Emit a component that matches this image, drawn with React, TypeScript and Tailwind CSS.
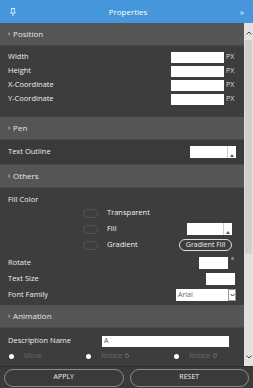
import React from 'react';

const font = { fontFamily: '"Open Sans", "Noto Sans", sans-serif' };

function SectionHeader({ title }: { title: string }) {
  return (
    <div className="h-[23px] bg-[#555555] flex items-center pl-[8px] text-[8px] text-[#e6e6e6] border-b border-[#4a4a4a]">
      <span className="mr-[3px] text-[7px]">›</span>
      {title}
    </div>
  );
}

function PxRow({ label }: { label: string }) {
  return (
    <div className="h-[14px] flex items-center pl-[8px] pr-[8px]">
      <span className="flex-1 text-[7.5px] text-[#eeeeee]">{label}</span>
      <div className="w-[53px] h-[11px] bg-white" />
      <span className="w-[10px] ml-[2px] text-[7px] text-[#dddddd]">PX</span>
    </div>
  );
}

function ColorPick({ w }: { w: string }) {
  return (
    <div className={`${w} h-[12px] bg-white flex justify-end`}>
      <div className="w-[9px] h-full border-l border-[#cccccc] flex items-end justify-center pb-[1px]">
        <div className="w-0 h-0 border-l-[2px] border-r-[2px] border-b-[3px] border-l-transparent border-r-transparent border-b-[#555555]" />
      </div>
    </div>
  );
}

function Oval() {
  return <div className="w-[15px] h-[9px] rounded-full border border-[#555555] ml-[83px] mr-[9px]" />;
}

function RotIcon({ flip }: { flip?: boolean }) {
  return (
    <svg width="6" height="6" viewBox="0 0 10 10" className={`ml-[2px] ${flip ? '-scale-x-100' : ''}`}>
      <path d="M2 6a3 3 0 1 0 1-4" fill="none" stroke="#777777" strokeWidth="1.6" />
      <path d="M1 1l3 1-2 2z" fill="#777777" />
    </svg>
  );
}

export default function App() {
  return (
    <div className="w-[253px] h-[388px] flex flex-col bg-[#3d3d3d] overflow-hidden" style={font}>
      <div className="h-[23px] bg-[#4596da] flex items-center px-[10px] text-white">
        <svg width="6" height="8" viewBox="0 0 6 8" className="opacity-90">
          <path d="M1 0.5h4M1.5 0.5v3L0.5 5h5L4.5 3.5v-3M3 5v3" fill="none" stroke="white" strokeWidth="0.9" />
        </svg>
        <span className="flex-1 text-center text-[8px]">Properties</span>
        <span className="text-[8px] tracking-[-1px]">»</span>
      </div>

      <div className="flex-1 flex min-h-0">
        <div className="flex-1 flex flex-col min-w-0">
          <SectionHeader title="Position" />
          <div className="pt-[4px] pb-[11px]">
            <PxRow label="Width" />
            <PxRow label="Height" />
            <PxRow label="X-Coordinate" />
            <PxRow label="Y-Coordinate" />
          </div>

          <SectionHeader title="Pen" />
          <div className="h-[25px] bg-[#3a3a3a] flex items-center pl-[8px] pr-[8px] border-b border-[#4a4a4a]">
            <span className="flex-1 text-[7.5px] text-[#eeeeee]">Text Outline</span>
            <ColorPick w="w-[46px]" />
          </div>

          <SectionHeader title="Others" />
          <div className="pt-[6px] pb-[2px] text-[7.5px] text-[#eeeeee]">
            <div className="h-[11px] flex items-center pl-[8px]">Fill Color</div>
            <div className="h-[16px] flex items-center">
              <Oval />
              <span>Transparent</span>
            </div>
            <div className="h-[16px] flex items-center pr-[12px]">
              <Oval />
              <span className="flex-1">Fill</span>
              <ColorPick w="w-[45px]" />
            </div>
            <div className="h-[16px] flex items-center pr-[12px]">
              <Oval />
              <span className="flex-1">Gradient</span>
              <div className="w-[53px] h-[12px] rounded-full border border-[#dddddd] flex items-center justify-center text-[7px]">
                Gradient Fill
              </div>
            </div>
            <div className="h-[2px]" />
            <div className="h-[16px] flex items-center pl-[8px] pr-[8px]">
              <span className="flex-1">Rotate</span>
              <div className="w-[29px] h-[12px] bg-white" />
              <span className="w-[5px] ml-[3px] text-[7px] leading-none self-start mt-[2px]">°</span>
            </div>
            <div className="h-[16px] flex items-center pl-[8px] pr-[9px]">
              <span className="flex-1">Text Size</span>
              <div className="w-[29px] h-[12px] bg-white" />
            </div>
            <div className="h-[16px] flex items-center pl-[8px] pr-[8px]">
              <span className="flex-1">Font Family</span>
              <div className="w-[60px] h-[12px] bg-white flex items-center">
                <span className="flex-1 pl-[2px] text-[7px] text-[#666666]">Arial</span>
                <div className="w-[8px] h-full border border-[#999999] flex items-center justify-center">
                  <svg width="5" height="4" viewBox="0 0 5 4">
                    <path d="M0.5 1l2 2 2-2" fill="none" stroke="#333333" strokeWidth="1" />
                  </svg>
                </div>
              </div>
            </div>
          </div>

          <SectionHeader title="Animation" />
          <div className="pt-[6px] text-[7.5px] text-[#eeeeee]">
            <div className="h-[14px] flex items-center pl-[8px] pr-[15px]">
              <span className="w-[94px]">Description Name</span>
              <div className="flex-1 h-[11px] bg-white flex items-center pl-[2px] text-[7px] text-[#555555]">A</div>
            </div>
            <div className="h-[16px] flex items-center text-[7px] text-[#6a6a6a]">
              <div className="w-[5px] h-[5px] rounded-full bg-white ml-[9px]" />
              <span className="ml-[10px] w-[62px]">Move</span>
              <div className="w-[5px] h-[5px] rounded-full bg-white" />
              <span className="ml-[10px] flex items-center w-[73px]">
                Rotate
                <RotIcon />
              </span>
              <div className="w-[5px] h-[5px] rounded-full bg-white" />
              <span className="ml-[10px] flex items-center">
                Rotate
                <RotIcon flip />
              </span>
            </div>
          </div>
        </div>

        <div className="w-[9px] bg-[#e2e2e2] flex flex-col items-center">
          <svg width="6" height="4" viewBox="0 0 6 4" className="mt-[8px]">
            <path d="M0.5 3.5L3 1l2.5 2.5" fill="none" stroke="#444444" strokeWidth="1" />
          </svg>
          <div className="w-[7px] h-[214px] mt-[5px] bg-[#cfcfcf]" />
          <div className="flex-1" />
          <svg width="6" height="4" viewBox="0 0 6 4" className="mb-[7px]">
            <path d="M0.5 0.5L3 3l2.5-2.5" fill="none" stroke="#444444" strokeWidth="1" />
          </svg>
        </div>
      </div>

      <div className="h-[22px] bg-[#3a3a3a] flex items-center gap-[6px] px-[4px] border-t border-[#2f2f2f]">
        <button className="flex-1 h-[18px] rounded-full border border-[#8a8a8a] text-[7px] text-[#f0f0f0]">APPLY</button>
        <button className="flex-1 h-[18px] rounded-full border border-[#8a8a8a] text-[7px] text-[#f0f0f0]">RESET</button>
      </div>
    </div>
  );
}
